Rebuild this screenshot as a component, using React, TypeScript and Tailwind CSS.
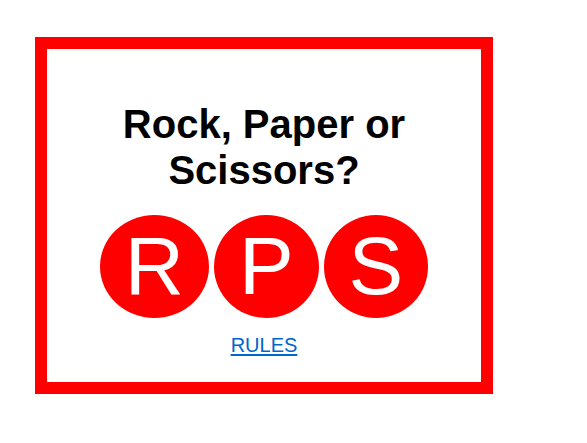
const choices = [
  { letter: 'R', name: 'Rock' },
  { letter: 'P', name: 'Paper' },
  { letter: 'S', name: 'Scissors' },
];

export default function App() {
  return (
    <main className="mt-[37px] mr-[94px] ml-[35px] border-[12px] border-[#ff0000] bg-white px-10 pt-[52px] pb-[25px] text-center font-['Liberation_Sans',Arial,sans-serif] text-[20px] leading-[23px] text-black">
      <h1 className="text-[40px] leading-[46px] font-bold">
        Rock, Paper or Scissors?
      </h1>
      <div className="mt-[22px] flex justify-center gap-[5px]">
        {choices.map(({ letter, name }) => (
          <button
            key={letter}
            type="button"
            aria-label={name}
            className="h-[103px] rounded-[50%] bg-[#ff0000] px-[25px] pb-[2px] text-[82px] leading-[92px] text-white"
          >
            {letter}
          </button>
        ))}
      </div>
      <p className="mt-4">
        <a href="#rules" className="text-[#0066cc] underline underline-offset-2">
          RULES
        </a>
      </p>
    </main>
  );
}
